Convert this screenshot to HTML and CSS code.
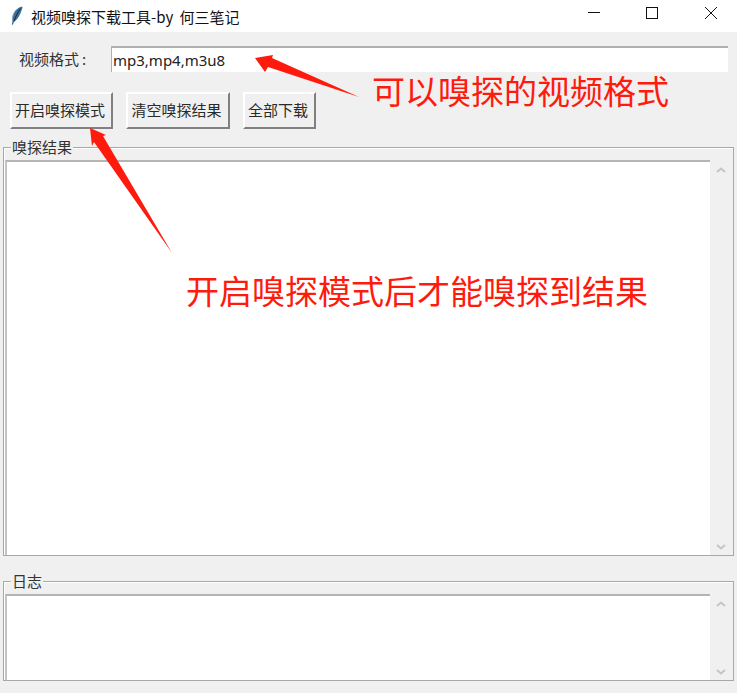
FILE: index.html
```html
<!DOCTYPE html>
<html lang="zh-CN">
<head>
  <meta charset="UTF-8">
  <meta name="viewport" content="width=device-width, initial-scale=1.0">
  <link rel="stylesheet" href="styles.css">
  <title>视频嗅探下载工具-by 何三笔记</title>
</head>
<body>
  <div class="titlebar">
    <svg class="feather" width="12" height="20" viewBox="0 0 12 20">
      <path d="M11 0.500C7 1.500 3.500 4.500 2 9C1.400 11 1.200 13 1.500 14.500L0.800 18.500L2 18.800L3 15.500C6 14.500 9 10 11.500 1.500Z" fill="#3a6f9e"/>
      <path d="M9.500 2.500C7 6 4.500 10.500 3 15.500" stroke="#10243a" stroke-width="1" fill="none"/>
      <path d="M1.500 14.500C1.200 12 2 8 4 5.500" stroke="#8aa3b8" stroke-width="1" fill="none"/>
    </svg>
    <span class="title-text">视频嗅探下载工具-by 何三笔记</span>
    <div class="win-controls">
      <svg class="win-btn" width="58" height="24" viewBox="0 0 58 24"><path d="M25 8.500H37" stroke="#111" stroke-width="1"/></svg>
      <svg class="win-btn" width="58" height="24" viewBox="0 0 58 24"><rect x="25.500" y="3.500" width="11" height="11" fill="none" stroke="#111" stroke-width="1"/></svg>
      <svg class="win-btn" width="58" height="24" viewBox="0 0 58 24"><path d="M26 3L38 15M38 3L26 15" stroke="#111" stroke-width="1"/></svg>
    </div>
  </div>

  <div class="format-row">
    <label class="format-label">视频格式&#8201;:</label>
    <input class="format-input" type="text" value="mp3,mp4,m3u8">
  </div>

  <div class="button-row">
    <button class="btn btn-sniff">开启嗅探模式</button>
    <button class="btn btn-clear">清空嗅探结果</button>
    <button class="btn btn-all">全部下载</button>
  </div>

  <div class="group group-results">
    <div class="group-title">嗅探结果</div>
    <div class="group-body">
      <div class="text-area"></div>
      <div class="scrollbar">
        <svg width="10" height="6" viewBox="0 0 10 6"><path d="M1 5L5 1.500L9 5" stroke="#c4c4c4" stroke-width="2" fill="none"/></svg>
        <svg width="10" height="6" viewBox="0 0 10 6"><path d="M1 1L5 4.500L9 1" stroke="#c4c4c4" stroke-width="2" fill="none"/></svg>
      </div>
    </div>
  </div>

  <div class="group group-log">
    <div class="group-title">日志</div>
    <div class="group-body">
      <div class="text-area"></div>
      <div class="scrollbar">
        <svg width="10" height="6" viewBox="0 0 10 6"><path d="M1 5L5 1.500L9 5" stroke="#c4c4c4" stroke-width="2" fill="none"/></svg>
        <svg width="10" height="6" viewBox="0 0 10 6"><path d="M1 1L5 4.500L9 1" stroke="#c4c4c4" stroke-width="2" fill="none"/></svg>
      </div>
    </div>
  </div>

  <!-- annotations drawn over the window -->
  <svg class="arrows" width="737" height="693" viewBox="0 0 737 693">
    <path d="M255 58L273 55L272 58L359 97L268 67L265 72Z" fill="#ff1a0e"/>
    <path d="M90 128L106 135L103 136L172 253L94 142L92 146Z" fill="#ff1a0e"/>
  </svg>
  <div class="note note-formats">可以嗅探的视频格式</div>
  <div class="note note-hint">开启嗅探模式后才能嗅探到结果</div>
</body>
</html>
```

FILE: styles.css
```css
* {
  box-sizing: border-box;
}

body {
  margin: 0;
  height: 693px;
  overflow: hidden;
  position: relative;
  background-color: #f0f0f0;
  color: #1a1a1a;
  font-family: "Noto Sans CJK SC", "Noto Sans", sans-serif;
  font-size: 15px;
}

.titlebar {
  display: flex;
  align-items: center;
  height: 32px;
  padding-left: 11px;
  background-color: #fff;
}

.feather {
  margin-right: 8px;
}

.title-text {
  color: #111;
  font-size: 15px;
  word-spacing: 3px;
}

.win-controls {
  display: flex;
  margin-left: auto;
}

.win-btn {
  display: block;
}

.format-row {
  display: flex;
  align-items: center;
  height: 26px;
  margin-top: 14px;
  padding: 0 9px 0 19px;
}

.format-label {
  width: 92px;
  padding-bottom: 2px;
  color: #333;
}

.format-input {
  flex: 1;
  height: 26px;
  padding: 0 1px;
  border: 0;
  border-top: 2px solid #b0b0b0;
  border-left: 1px solid #b0b0b0;
  outline: none;
  background-color: #fff;
  color: #222;
  font-family: "Noto Sans", sans-serif;
  font-size: 15px;
}

.button-row {
  display: flex;
  gap: 13px;
  height: 37px;
  margin-top: 20px;
  padding-left: 10px;
}

.btn {
  padding: 0 3px 2px 0;
  border: 2px solid;
  border-color: #fff #808080 #808080 #fff;
  background-color: #f0f0f0;
  color: #2a2a2a;
  font-family: "Noto Sans CJK SC", sans-serif;
  font-size: 15px;
}

.btn-sniff {
  width: 103px;
}

.btn-clear {
  width: 104px;
}

.btn-all {
  width: 73px;
}

.group {
  display: flex;
  flex-direction: column;
  margin: 0 3px;
  border: 1px solid #a8a8a8;
  box-shadow: inset 1px 1px 0 #fff;
}

.group-results {
  height: 409px;
  margin-top: 18px;
}

.group-log {
  height: 100px;
  margin-top: 25px;
}

.group-title {
  align-self: flex-start;
  height: 20px;
  margin: -11px 0 0 7px;
  padding: 0 1px;
  background-color: #f0f0f0;
  color: #333;
  line-height: 20px;
}

.group-body {
  display: flex;
  flex: 1;
  min-height: 0;
  margin-top: 3px;
  padding-left: 1px;
}

.text-area {
  width: 705px;
  border-top: 2px solid #b4b4b4;
  border-left: 2px solid #c4c4c4;
  background-color: #fff;
}

.scrollbar {
  display: flex;
  flex-direction: column;
  align-items: center;
  justify-content: space-between;
  width: 18px;
  margin-left: 2px;
  padding: 7px 0 5px;
}

.arrows {
  position: absolute;
  top: 0;
  left: 0;
}

.note {
  position: absolute;
  color: #ff1a0e;
  font-size: 33px;
  line-height: 44px;
  white-space: nowrap;
}

.note-formats {
  top: 68px;
  left: 372px;
}

.note-hint {
  top: 268px;
  left: 186px;
}
```
